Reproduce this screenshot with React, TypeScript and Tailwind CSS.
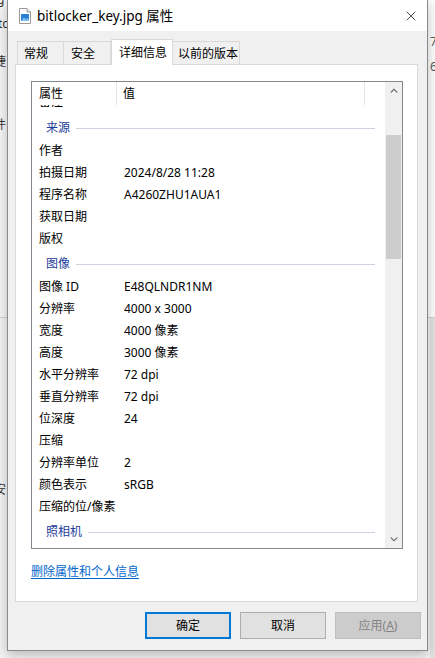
import { X } from 'lucide-react';

type Row = { kind: 'row'; label: string; value?: string } | { kind: 'group'; label: string };

const rows: Row[] = [
  { kind: 'group', label: '来源' },
  { kind: 'row', label: '作者' },
  { kind: 'row', label: '拍摄日期', value: '2024/8/28 11:28' },
  { kind: 'row', label: '程序名称', value: 'A4260ZHU1AUA1' },
  { kind: 'row', label: '获取日期' },
  { kind: 'row', label: '版权' },
  { kind: 'group', label: '图像' },
  { kind: 'row', label: '图像 ID', value: 'E48QLNDR1NM' },
  { kind: 'row', label: '分辨率', value: '4000 x 3000' },
  { kind: 'row', label: '宽度', value: '4000 像素' },
  { kind: 'row', label: '高度', value: '3000 像素' },
  { kind: 'row', label: '水平分辨率', value: '72 dpi' },
  { kind: 'row', label: '垂直分辨率', value: '72 dpi' },
  { kind: 'row', label: '位深度', value: '24' },
  { kind: 'row', label: '压缩' },
  { kind: 'row', label: '分辨率单位', value: '2' },
  { kind: 'row', label: '颜色表示', value: 'sRGB' },
  { kind: 'row', label: '压缩的位/像素' },
  { kind: 'group', label: '照相机' },
  { kind: 'row', label: '制造商' },
];

const tabs = [
  { name: '常规', w: 'w-[47px]', pl: 'pl-[6px]' },
  { name: '安全', w: 'w-[48px]', pl: 'pl-[7px]' },
  { name: '详细信息', w: 'w-[62px]', pl: 'pl-[7px]', active: true },
  { name: '以前的版本', w: 'w-[68px]', pl: 'pl-[5px]' },
];

function FileIcon() {
  return (
    <svg width="14" height="16" viewBox="0 0 14 16">
      <path d="M1.5 0.5 H9 L12.5 4 V15.5 H1.5 Z" fill="#fff" stroke="#9a9a9a" />
      <path d="M9 0.5 V4 H12.5" fill="#e8e8e8" stroke="#9a9a9a" />
      <rect x="3" y="6" width="8" height="7" fill="#2a7fd4" />
      <path d="M3 13 L6 9.5 L8 11.5 L9.5 10 L11 12 V13 Z" fill="#7fc0f0" />
    </svg>
  );
}

function Chevron({ up }: { up?: boolean }) {
  return (
    <svg width="8" height="5" viewBox="0 0 8 5">
      {up ? (
        <path d="M0 4.5 L4 0.5 L8 4.5 L6.5 4.5 L4 2 L1.5 4.5 Z" fill="#606060" />
      ) : (
        <path d="M0 0.5 L4 4.5 L8 0.5 L6.5 0.5 L4 3 L1.5 0.5 Z" fill="#606060" />
      )}
    </svg>
  );
}

export default function App() {
  return (
    <div className="relative w-[435px] h-[658px] overflow-hidden bg-[#f4f4f4] font-['Noto_Sans','Noto_Sans_CJK_SC',sans-serif] text-[12px] text-black">
      {/* Explorer window behind the dialog */}
      <div className="absolute left-0 top-0 w-[8px] h-[318px] bg-[#f7f7f7] border-b border-[#d0d0d0]" />
      <div className="absolute left-[428px] top-0 w-[7px] h-[318px] bg-white border-b border-[#d0d0d0]" />
      <div className="absolute left-[430px] top-[318px] w-[5px] h-[340px] bg-[#e4e4e4]" />
      <span className="absolute left-[-3px] top-[-8px] leading-[16px] text-[#333]">g</span>
      <span className="absolute left-[-2px] top-[16px] leading-[16px] text-[#333]">tc</span>
      <span className="absolute left-[-6px] top-[54px] leading-[16px] text-[#333]">捷</span>
      <span className="absolute left-[-6px] top-[117px] leading-[16px] text-[#333]">件</span>
      <span className="absolute left-[-6px] top-[482px] leading-[16px] text-[#333]">安</span>
      <span className="absolute left-[430px] top-[34px] z-20 leading-[16px] text-[#555]">7</span>
      <span className="absolute left-[430px] top-[59px] z-20 leading-[16px] text-[#555]">6</span>

      {/* Dialog window */}
      <div className="absolute left-[7px] top-[-1px] w-[421px] h-[652px] border border-[#8a8a8a] bg-[#f0f0f0] shadow-[0_4px_12px_rgba(0,0,0,0.25)] flex flex-col">
        {/* Title bar */}
        <div className="h-[31px] bg-white flex items-center shrink-0">
          <div className="ml-[10px] mt-[1px]">
            <FileIcon />
          </div>
          <span className="ml-[5px] text-[13.5px] leading-[16px] mt-[1px]">bitlocker_key.jpg 属性</span>
          <X className="ml-auto mr-[8px] w-[16px] h-[16px] text-[#222]" strokeWidth={1.2} />
        </div>

        {/* Tabs */}
        <div className="flex items-end h-[25px] mt-[8px] pl-[9px] shrink-0">
          {tabs.map((t) =>
            t.active ? (
              <div
                key={t.name}
                className={`${t.w} ${t.pl} h-[26px] mb-[-1px] relative z-10 bg-white border border-b-0 border-[#d9d9d9] flex items-center leading-[16px]`}
              >
                {t.name}
              </div>
            ) : (
              <div
                key={t.name}
                className={`${t.w} ${t.pl} h-[23px] bg-[#f0f0f0] border border-b-0 border-[#d9d9d9] -ml-[1px] first:ml-0 flex items-center pt-[1px] leading-[16px]`}
              >
                {t.name}
              </div>
            )
          )}
        </div>

        {/* Tab panel */}
        <div className="ml-[7px] w-[403px] h-[538px] bg-white border border-[#d9d9d9] pl-[15px] pt-[16px] shrink-0">
          {/* Property list */}
          <div className="w-[372px] h-[468px] border border-[#828790] flex">
            <div className="flex-1 flex flex-col overflow-hidden">
              <div className="h-[23px] flex shrink-0 leading-[16px]">
                <div className="w-[85px] pl-[7px] flex items-center border-r border-[#e5e5e5]">属性</div>
                <div className="w-[248px] pl-[6px] flex items-center border-r border-[#e5e5e5]">值</div>
              </div>
              <div className="flex-1 overflow-hidden">
                <div className="mt-[-16px]">
                  <div className="h-[25px] flex items-center pl-[7px] leading-[16px]">备注</div>
                  {rows.map((r) =>
                    r.kind === 'group' ? (
                      <div key={r.label} className="h-[26px] flex items-center pt-[2px] pl-[14px] pr-[10px]">
                        <span className="text-[#1e3c9a] leading-[16px]">{r.label}</span>
                        <div className="flex-1 h-px bg-[#ccd3de] ml-[6px]" />
                      </div>
                    ) : (
                      <div key={r.label} className="h-[22px] flex items-center leading-[16px]">
                        <div className="w-[92px] pl-[7px] shrink-0">{r.label}</div>
                        <div>{r.value}</div>
                      </div>
                    )
                  )}
                </div>
              </div>
            </div>
            {/* Scrollbar */}
            <div className="w-[17px] bg-[#f0f0f0] flex flex-col shrink-0">
              <div className="h-[17px] flex items-center justify-center">
                <Chevron up />
              </div>
              <div className="mt-[36px] mx-[1px] h-[124px] bg-[#cdcdcd]" />
              <div className="flex-1" />
              <div className="h-[17px] flex items-center justify-center">
                <Chevron />
              </div>
            </div>
          </div>

          <div className="mt-[15px] leading-[16px]">
            <span className="text-[#0066cc] underline underline-offset-2">删除属性和个人信息</span>
          </div>
        </div>

        {/* Buttons */}
        <div className="flex justify-end gap-[9px] mt-[10px] pr-[6px] shrink-0">
          <button className="w-[86px] h-[27px] bg-[#e1e1e1] border-2 border-[#0078d7] flex items-center justify-center leading-[16px]">
            确定
          </button>
          <button className="w-[86px] h-[27px] bg-[#e1e1e1] border border-[#adadad] flex items-center justify-center leading-[16px]">
            取消
          </button>
          <button className="w-[86px] h-[27px] bg-[#cccccc] border border-[#bfbfbf] text-[#838383] flex items-center justify-center leading-[16px]">
            应用(<span className="underline">A</span>)
          </button>
        </div>
      </div>
    </div>
  );
}
